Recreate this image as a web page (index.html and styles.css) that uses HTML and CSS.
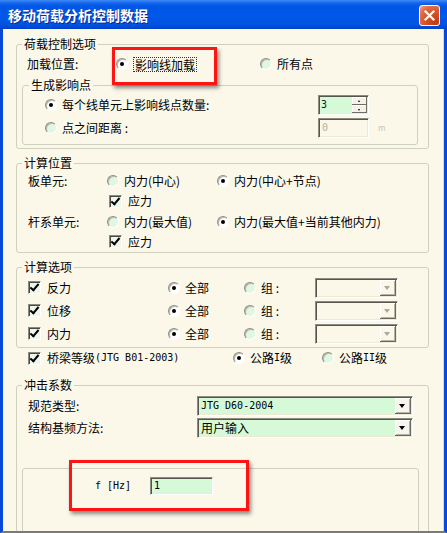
FILE: index.html
```
<!DOCTYPE html>
<html>
<head>
<meta charset="utf-8">
<link rel="stylesheet" href="styles.css">
</head>
<body>
<div class="window">
  <div class="titlebar">
    <span class="title">移动荷载分析控制数据</span>
    <span class="close"><svg width="13" height="13" viewBox="0 0 13 13"><path d="M2.5 2.5L10.5 10.5M10.5 2.5L2.5 10.5" stroke="#fff" stroke-width="2.2" stroke-linecap="square"/></svg></span>
  </div>
  <div class="client">
    <div class="group g1">
      <div class="legend">荷载控制选项</div>
      <div class="row h20 pl10 mt3">
        <span class="w89">加载位置:</span>
        <span class="opt w144"><span class="radio on"></span><span class="focus">影响线加载</span></span>
        <span class="opt"><span class="radio"></span>所有点</span>
      </div>
      <div class="group sub">
        <div class="legend sl">生成影响点</div>
        <div class="row h20 pl22 mt3">
          <span class="opt w273"><span class="radio on"></span>每个线单元上影响线点数量:</span>
          <div class="spin sunken"><span class="field mono">3</span><span class="btns"><span class="sb up"></span><span class="sb dn"></span></span></div>
        </div>
        <div class="row h20 pl22 mt3">
          <span class="opt w273"><span class="radio"></span>点之间距离 :</span>
          <div class="input sunken disabled mono">0</div>
          <span class="unit">m</span>
        </div>
      </div>
    </div>

    <div class="group g2">
      <div class="legend">计算位置</div>
      <div class="row h20 pl11 mt1">
        <span class="w79">板单元:</span>
        <span class="opt w110"><span class="radio"></span>内力(中心)</span>
        <span class="opt"><span class="radio on"></span>内力(中心+节点)</span>
      </div>
      <div class="row h20 ind">
        <span class="opt"><span class="check on"></span>应力</span>
      </div>
      <div class="row h21 pl11">
        <span class="w79">杆系单元:</span>
        <span class="opt w110"><span class="radio"></span>内力(最大值)</span>
        <span class="opt"><span class="radio on"></span>内力(最大值+当前其他内力)</span>
      </div>
      <div class="row h19 ind">
        <span class="opt"><span class="check on"></span>应力</span>
      </div>
    </div>

    <div class="group g3">
      <div class="legend">计算选项</div>
      <div class="row h23 pl11 mt2">
        <span class="opt w140"><span class="check on"></span>反力</span>
        <span class="opt w76"><span class="radio on"></span>全部</span>
        <span class="opt w71"><span class="radio"></span>组 :</span>
        <div class="combo sunken dis w83"><span class="ctext"></span><span class="cbtn"></span></div>
      </div>
      <div class="row h23 pl11">
        <span class="opt w140"><span class="check on"></span>位移</span>
        <span class="opt w76"><span class="radio on"></span>全部</span>
        <span class="opt w71"><span class="radio"></span>组 :</span>
        <div class="combo sunken dis w83"><span class="ctext"></span><span class="cbtn"></span></div>
      </div>
      <div class="row h23 pl11">
        <span class="opt w140"><span class="check on"></span>内力</span>
        <span class="opt w76"><span class="radio on"></span>全部</span>
        <span class="opt w71"><span class="radio"></span>组 :</span>
        <div class="combo sunken dis w83"><span class="ctext"></span><span class="cbtn"></span></div>
      </div>
    </div>

    <div class="row h20 pl12">
      <span class="opt w205"><span class="check on"></span>桥梁等级<span class="mono">(JTG B01-2003)</span></span>
      <span class="opt w89"><span class="radio on"></span>公路<span class="mono">I</span>级</span>
      <span class="opt"><span class="radio"></span>公路<span class="mono">II</span>级</span>
    </div>

    <div class="group g4">
      <div class="legend">冲击系数</div>
      <div class="row h22 pl11 mt3">
        <span class="w169">规范类型:</span>
        <div class="combo sunken w216"><span class="ctext mono">JTG D60-2004</span><span class="cbtn"></span></div>
      </div>
      <div class="row h22 pl11">
        <span class="w169">结构基频方法:</span>
        <div class="combo sunken w216"><span class="ctext">用户输入</span><span class="cbtn"></span></div>
      </div>
      <div class="box">
        <div class="row h18">
          <span class="w55 mono">f [Hz]</span>
          <div class="finput sunken mono">1</div>
        </div>
      </div>
    </div>

    <div class="mark m1"></div>
    <div class="mark m2"></div>
  </div>
</div>
</body>
</html>
```

FILE: styles.css
```
* { box-sizing: border-box; }
html, body { margin: 0; padding: 0; }
body {
  width: 447px;
  height: 533px;
  overflow: hidden;
  background: #fff;
  font-family: "Noto Sans CJK SC", "Noto Sans", sans-serif;
  font-size: 12px;
  line-height: 14px;
  color: #000;
}
.window { width: 447px; height: 533px; display: flex; flex-direction: column; }
.titlebar {
  flex: none;
  height: 29px;
  display: flex;
  align-items: center;
  justify-content: space-between;
  padding: 0 7px 0 8px;
  background: linear-gradient(#3E8CF6 0, #1666EC 3px, #0056E4 6px, #0058EA 50%, #0053E2 85%, #0042C6 100%);
}
.title {
  color: #fff;
  font-weight: bold;
  font-size: 14px;
  text-shadow: 1px 1px 0 #0A2A90;
}
.close {
  width: 21px;
  height: 21px;
  margin-top: 1px;
  border: 1px solid #fff;
  border-radius: 3px;
  display: flex;
  align-items: center;
  justify-content: center;
  background: radial-gradient(circle at 80% 85%, #C23A12 0%, #D8572C 50%, #E47251 78%, #F2AE98 100%);
}
.client {
  flex: 1;
  position: relative;
  overflow: hidden;
  background: #FBF8EA;
  border-left: 3px solid #0A48DA;
  border-right: 3px solid #0A48DA;
  border-bottom: 2px solid #7A7A7A;
  box-shadow: inset -1px 0 0 #DEDBCD;
  padding: 15px 15px 0 13px;
}
.group {
  border: 1px solid #D0D0BF;
  border-radius: 3px;
}
.legend {
  width: max-content;
  height: 14px;
  margin: -8px 0 0 5px;
  padding: 0 2px;
  background: #FBF8EA;
  line-height: 14px;
}
.legend.sl { margin-left: 6px; }
.g1 { padding-bottom: 3px; }
.sub { margin: 11px 10px 0 5px; padding-bottom: 6px; }
.g2 { margin-top: 14px; padding-bottom: 1px; }
.g3 { margin-top: 14px; padding-bottom: 2px; }
.g4 { margin-top: 17px; height: 200px; }

.row { display: flex; align-items: center; white-space: nowrap; }
.h18 { height: 18px; }
.h19 { height: 19px; }
.h20 { height: 20px; }
.h21 { height: 21px; }
.h22 { height: 22px; }
.h23 { height: 23px; }
.pl10 { padding-left: 10px; }
.pl11 { padding-left: 11px; }
.pl12 { padding-left: 12px; }
.pl22 { padding-left: 22px; }
.mt1 { margin-top: 1px; }
.mt2 { margin-top: 2px; }
.mt3 { margin-top: 3px; }
.ind { padding-left: 92px; }

.w55 { width: 55px; flex: none; }
.w71 { width: 71px; flex: none; }
.w76 { width: 76px; flex: none; }
.w79 { width: 79px; flex: none; }
.w83 { width: 83px; flex: none; }
.w89 { width: 89px; flex: none; }
.w110 { width: 110px; flex: none; }
.w140 { width: 140px; flex: none; }
.w144 { width: 144px; flex: none; }
.w169 { width: 169px; flex: none; }
.w205 { width: 205px; flex: none; }
.w216 { width: 216px; flex: none; }
.w273 { width: 273px; flex: none; }

.opt { display: flex; align-items: center; }
.mono { font-family: "DejaVu Sans Mono", "Liberation Mono", monospace; font-size: 10px; }

.radio {
  flex: none;
  position: relative;
  width: 12px;
  height: 12px;
  margin-right: 5px;
  border-radius: 50%;
  border: 1px solid;
  border-color: #8E8E84 #FFFFFF #FFFFFF #8E8E84;
  background: #E2F6E4;
  box-shadow: inset 1px 1px 0 #B8B8AC;
}
.radio.on { background: #FFFFFF; }
.radio.on::after {
  content: "";
  position: absolute;
  left: 3px;
  top: 3px;
  width: 4px;
  height: 4px;
  border-radius: 50%;
  background: #000;
}
.check {
  flex: none;
  position: relative;
  width: 13px;
  height: 13px;
  margin-right: 6px;
  border: 1px solid;
  border-color: #8A8A80 #FFFFFF #FFFFFF #8A8A80;
  box-shadow: inset 1px 1px 0 #4A4A44;
  background: #ECF6EA;
}
.check.on::after {
  content: "";
  position: absolute;
  left: 3px;
  top: 0px;
  width: 3px;
  height: 7px;
  border-right: 2px solid #000;
  border-bottom: 2px solid #000;
  transform: rotate(40deg);
}
.focus { border: 1px dotted #333; padding: 0 1px; line-height: 13px; }

.sunken {
  border: 1px solid;
  border-color: #8C8C80 #FFFFFF #FFFFFF #8C8C80;
  box-shadow: inset 1px 1px 0 #56564E, inset -1px -1px 0 #ECE9D8;
}
.spin { width: 51px; height: 20px; display: flex; padding: 1px; background: #D6FAD8; }
.spin .field { flex: 1; padding-left: 1px; line-height: 16px; color: #1A1A1A; }
.spin .btns { width: 15px; display: flex; flex-direction: column; }
.sb {
  flex: 1;
  position: relative;
  background: #F3F1E8;
  box-shadow: inset -1px -1px 0 #6E6E66, inset 1px 1px 0 #FFFFFF;
}
.sb::after {
  content: "";
  position: absolute;
  left: 6px;
  top: 3px;
  width: 0;
  height: 0;
  border-left: 1.5px solid transparent;
  border-right: 1.5px solid transparent;
}
.sb.up::after { border-bottom: 2px solid #000; }
.sb.dn::after { border-top: 2px solid #000; top: 4px; }

.input { width: 51px; height: 20px; padding-left: 3px; line-height: 18px; }
.input.disabled { background: #FBF8EA; color: #B0B0A2; }
.unit { margin-left: 9px; font-size: 8px; color: #C4C4B6; }

.combo { height: 20px; display: flex; align-items: stretch; padding: 1px; background: #D6FAD8; }
.combo.dis { background: #FBF8EA; }
.ctext { flex: 1; padding-left: 2px; line-height: 16px; overflow: hidden; }
.cbtn {
  flex: none;
  width: 16px;
  position: relative;
  background: #F6F5EE;
  box-shadow: inset -1px -1px 0 #6A6A62, inset 1px 1px 0 #FFFFFF, inset -2px -2px 0 #B4B2A6;
}
.cbtn::after {
  content: "";
  position: absolute;
  left: 4px;
  top: 6px;
  width: 0;
  height: 0;
  border-left: 3.5px solid transparent;
  border-right: 3.5px solid transparent;
  border-top: 4px solid #000;
}
.combo.dis .cbtn { background: #FBF8EA; }
.combo.dis .cbtn::after { border-top-color: #A8A89C; }

.box {
  margin: 29px 9px 0 5px;
  height: 120px;
  border: 1px solid #D0D0BF;
  border-radius: 3px;
  padding: 8px 0 0 72px;
}
.finput { width: 63px; height: 18px; padding-left: 3px; line-height: 16px; background: #D6FAD8; }

.mark {
  position: absolute;
  border: 3px solid #FF1414;
  box-shadow: 2px 3px 4px rgba(0, 0, 0, 0.45);
}
.m1 { left: 109px; top: 18px; width: 105px; height: 38px; }
.m2 { left: 66px; top: 431px; width: 180px; height: 51px; }
```
